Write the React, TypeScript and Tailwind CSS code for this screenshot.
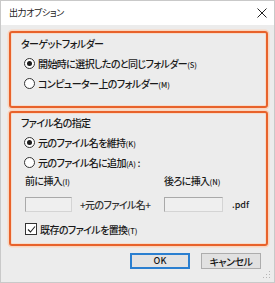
import React from "react";

const font = { fontFamily: '"Noto Sans CJK JP", "Noto Sans", sans-serif' };

function Radio({ checked }: { checked?: boolean }) {
  return (
    <span className="w-[11px] h-[11px] rounded-full border border-[#333] bg-white flex items-center justify-center shrink-0">
      {checked && <span className="w-[5px] h-[5px] rounded-full bg-[#1a1a1a]" />}
    </span>
  );
}

function Key({ k }: { k: string }) {
  return <span className="text-[7.5px] tracking-[0px]">({k})</span>;
}

export default function App() {
  return (
    <div
      className="relative w-[275px] h-[283px] bg-[#ececec] flex flex-col text-[#1a1a1a] [font-feature-settings:'palt'] overflow-hidden border border-[#c9c9c9]"
      style={font}
    >
      <div className="h-[24px] bg-white flex items-center justify-between pl-[8px] pr-[6px] shrink-0">
        <span className="text-[9px] tracking-[-0.4px]">出力オプション</span>
        <svg width="10" height="10" viewBox="0 0 10 10" className="mr-[1px]">
          <path d="M0.5 0.5 L9.5 9.5 M9.5 0.5 L0.5 9.5" stroke="#222" strokeWidth="1" />
        </svg>
      </div>

      <div className="flex flex-col pl-[8px] pr-[6px] pt-[6px] font-medium">
        <div className="h-[77px] border-2 border-[#e8622b] rounded-[3px] shadow-[0_0_0_1.5px_#f9d6c0,inset_0_0_0_1px_#f7dccb] flex flex-col text-[10px] tracking-[-0.6px]">
          <div className="h-[20px] flex items-center pl-[10px]">ターゲットフォルダー</div>
          <div className="h-[20px] flex items-center pl-[13px] gap-[3px]">
            <Radio checked />
            <span>
              開始時に選択したのと同じフォルダー<Key k="S" />
            </span>
          </div>
          <div className="h-[20px] flex items-center pl-[13px] gap-[3px]">
            <Radio />
            <span>
              コンピューター上のフォルダー<Key k="M" />
            </span>
          </div>
        </div>

        <div className="mt-[3px] h-[135px] border-2 border-[#e8622b] rounded-[3px] shadow-[0_0_0_1.5px_#f9d6c0,inset_0_0_0_1px_#f7dccb] flex flex-col text-[10px] tracking-[-0.6px]">
          <div className="h-[18px] flex items-center pl-[10px]">ファイル名の指定</div>
          <div className="mt-[1px] h-[20px] flex items-center pl-[13px] gap-[3px]">
            <Radio checked />
            <span>
              元のファイル名を維持<Key k="K" />
            </span>
          </div>
          <div className="h-[20px] flex items-center pl-[13px] gap-[3px]">
            <Radio />
            <span>
              元のファイル名に追加<Key k="A" /> :
            </span>
          </div>
          <div className="h-[16px] grid grid-cols-[47px_92px_59px_auto] items-center pl-[14px]">
            <span className="whitespace-nowrap">
              前に挿入<Key k="I" />
            </span>
            <span />
            <span className="whitespace-nowrap col-span-2">
              後ろに挿入<Key k="N" />
            </span>
          </div>
          <div className="mt-[9px] h-[15px] grid grid-cols-[47px_92px_59px_auto] items-center pl-[14px]">
            <div className="h-[15px] border border-[#a9a9a9] border-r-[#d4d4d4] border-b-[#d4d4d4] bg-[#efefef]" />
            <span className="pl-[8px] whitespace-nowrap text-[#333]">+元のファイル名+</span>
            <div className="h-[15px] border border-[#a9a9a9] border-r-[#d4d4d4] border-b-[#d4d4d4] bg-[#efefef]" />
            <span className="pl-[9px] text-[9px] tracking-[0px]">.pdf</span>
          </div>
          <div className="mt-[8px] h-[18px] flex items-center pl-[14px] gap-[3px]">
            <span className="w-[12px] h-[12px] border border-[#333] bg-white flex items-center justify-center shrink-0">
              <svg width="9" height="9" viewBox="0 0 9 9">
                <path d="M1 4.5 L3.5 7 L8 1.5" stroke="#222" strokeWidth="1.1" fill="none" />
              </svg>
            </span>
            <span>
              既存のファイルを置換<Key k="T" />
            </span>
          </div>
        </div>

        <div className="mt-[7px] flex justify-end gap-[11px] pr-[7px]">
          <div className="w-[60px] h-[16px] border-2 border-[#2a7fd0] bg-[#e3e3e3] flex items-center justify-center text-[9px] tracking-[0px]">
            OK
          </div>
          <div className="w-[60px] h-[16px] border border-[#adadad] bg-[#e1e1e1] flex items-center justify-center text-[10px] tracking-[-0.5px]">
            キャンセル
          </div>
        </div>
      </div>

      <svg width="8" height="8" viewBox="0 0 8 8" className="absolute right-[3px] bottom-[3px]">
        <rect x="6" y="0" width="1" height="1" fill="#b5b5b5" />
        <rect x="3" y="3" width="1" height="1" fill="#b5b5b5" />
        <rect x="6" y="3" width="1" height="1" fill="#b5b5b5" />
        <rect x="0" y="6" width="1" height="1" fill="#b5b5b5" />
        <rect x="3" y="6" width="1" height="1" fill="#b5b5b5" />
        <rect x="6" y="6" width="1" height="1" fill="#b5b5b5" />
      </svg>
    </div>
  );
}
